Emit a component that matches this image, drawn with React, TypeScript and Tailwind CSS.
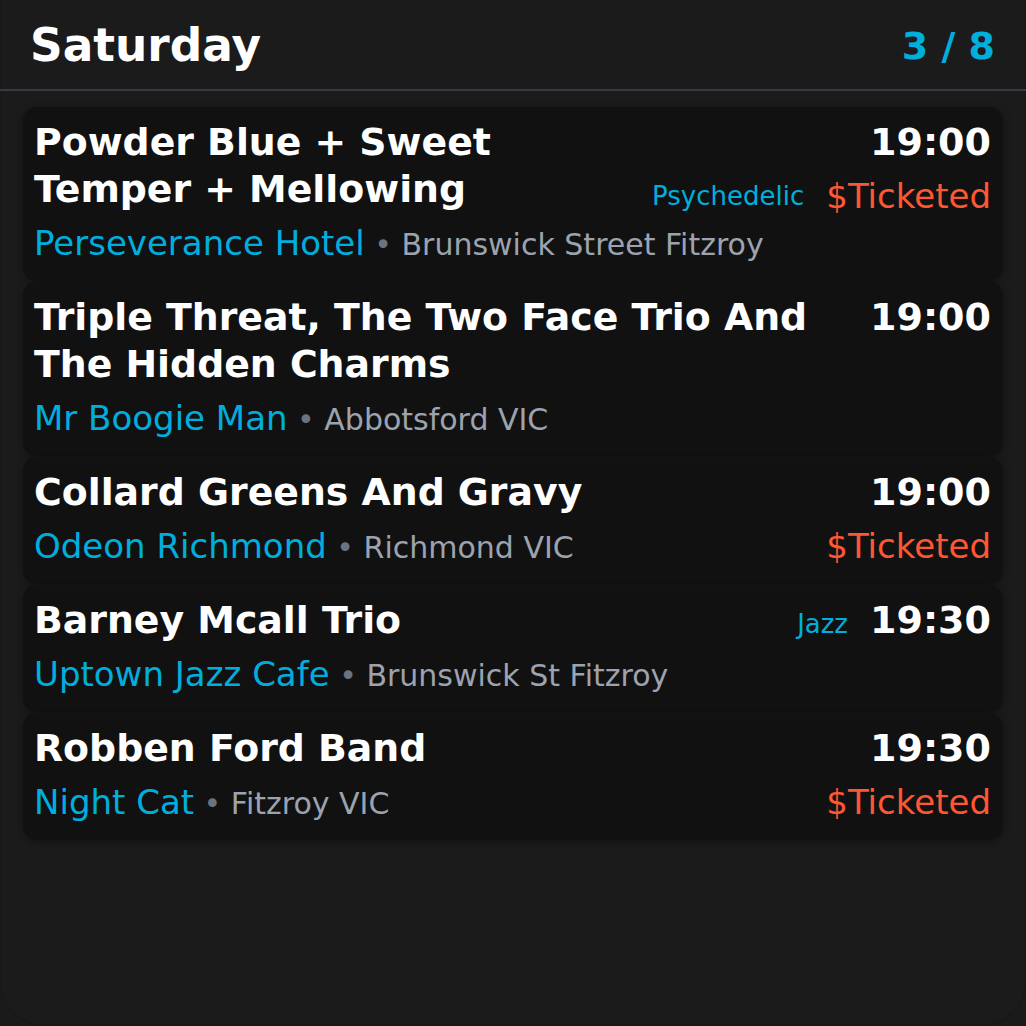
import React from "react";

type Ev = {
  title: string;
  time: string;
  venue: string;
  address: string;
  genre?: string;
  genreWithTime?: boolean;
  price?: "row2" | "venue";
};

const events: Ev[] = [
  {
    title: "Powder Blue + Sweet Temper + Mellowing",
    time: "19:00",
    venue: "Perseverance Hotel",
    address: "Brunswick Street Fitzroy",
    genre: "Psychedelic",
    price: "row2",
  },
  {
    title: "Triple Threat, The Two Face Trio And The Hidden Charms",
    time: "19:00",
    venue: "Mr Boogie Man",
    address: "Abbotsford VIC",
  },
  {
    title: "Collard Greens And Gravy",
    time: "19:00",
    venue: "Odeon Richmond",
    address: "Richmond VIC",
    price: "venue",
  },
  {
    title: "Barney Mcall Trio",
    time: "19:30",
    venue: "Uptown Jazz Cafe",
    address: "Brunswick St Fitzroy",
    genre: "Jazz",
    genreWithTime: true,
  },
  {
    title: "Robben Ford Band",
    time: "19:30",
    venue: "Night Cat",
    address: "Fitzroy VIC",
    price: "venue",
  },
];

function Card({ e }: { e: Ev }) {
  return (
    <div className="rounded-[14px] bg-[#111111] py-3 pl-[11px] pr-3 shadow-[0_2px_8px_rgba(0,0,0,0.3)]">
      <div className="flex items-start gap-4">
        <div className="min-w-0 flex-1">
          <div className="text-[37.8px] font-bold leading-[47px] text-white">{e.title}</div>
          <div className="mt-1 h-[52px] whitespace-nowrap text-[34px] leading-[52px]">
            <span className="text-[#00aede]">{e.venue}</span>
            <span className="text-[30px] leading-none text-[#6b7280]"> • </span>
            <span className="text-[30px] leading-none text-[#9ca3af]">{e.address}</span>
          </div>
        </div>
        <div className="flex shrink-0 flex-col items-end">
          <div className="flex h-[47px] items-baseline gap-[22px]">
            {e.genre && e.genreWithTime && (
              <span className="text-[26px] leading-[39px] text-[#00aede]">{e.genre}</span>
            )}
            <span className="text-[38px] font-bold leading-[47px] text-white">{e.time}</span>
          </div>
          {e.price === "row2" && (
            <div className="mt-1 flex h-[52px] items-center gap-[22px]">
              {e.genre && !e.genreWithTime && (
                <span className="text-[26px] leading-[39px] text-[#00aede]">{e.genre}</span>
              )}
              <span className="text-[34px] leading-[52px] text-[#ff5733]">$Ticketed</span>
            </div>
          )}
          {e.price === "venue" && (
            <div className="mt-1 flex h-[52px] items-center">
              <span className="text-[34px] leading-[52px] text-[#ff5733]">$Ticketed</span>
            </div>
          )}
        </div>
      </div>
    </div>
  );
}

export default function App() {
  return (
    <div
      className="h-[1026px] w-[1026px] bg-[#1a1a1a]"
      style={{ fontFamily: '"DejaVu Sans", "Noto Sans", sans-serif' }}
    >
      <div className="flex h-full flex-col rounded-b-[44px] bg-[#1b1b1b] shadow-[inset_0_-1px_2px_rgba(0,0,0,0.15)]">
        <header className="flex h-[91px] shrink-0 items-center justify-between border-b-2 border-[#353a44] pl-[30px] pr-[31px]">
          <h1 className="pt-[2px] text-[45.4px] font-bold leading-none text-white">Saturday</h1>
          <div className="pt-[2px] text-[38px] font-bold leading-none text-[#00aede]">3 / 8</div>
        </header>
        <div className="flex flex-col gap-px px-[23px] pt-[16px]">
          {events.map((e, i) => (
            <Card key={i} e={e} />
          ))}
        </div>
      </div>
    </div>
  );
}
